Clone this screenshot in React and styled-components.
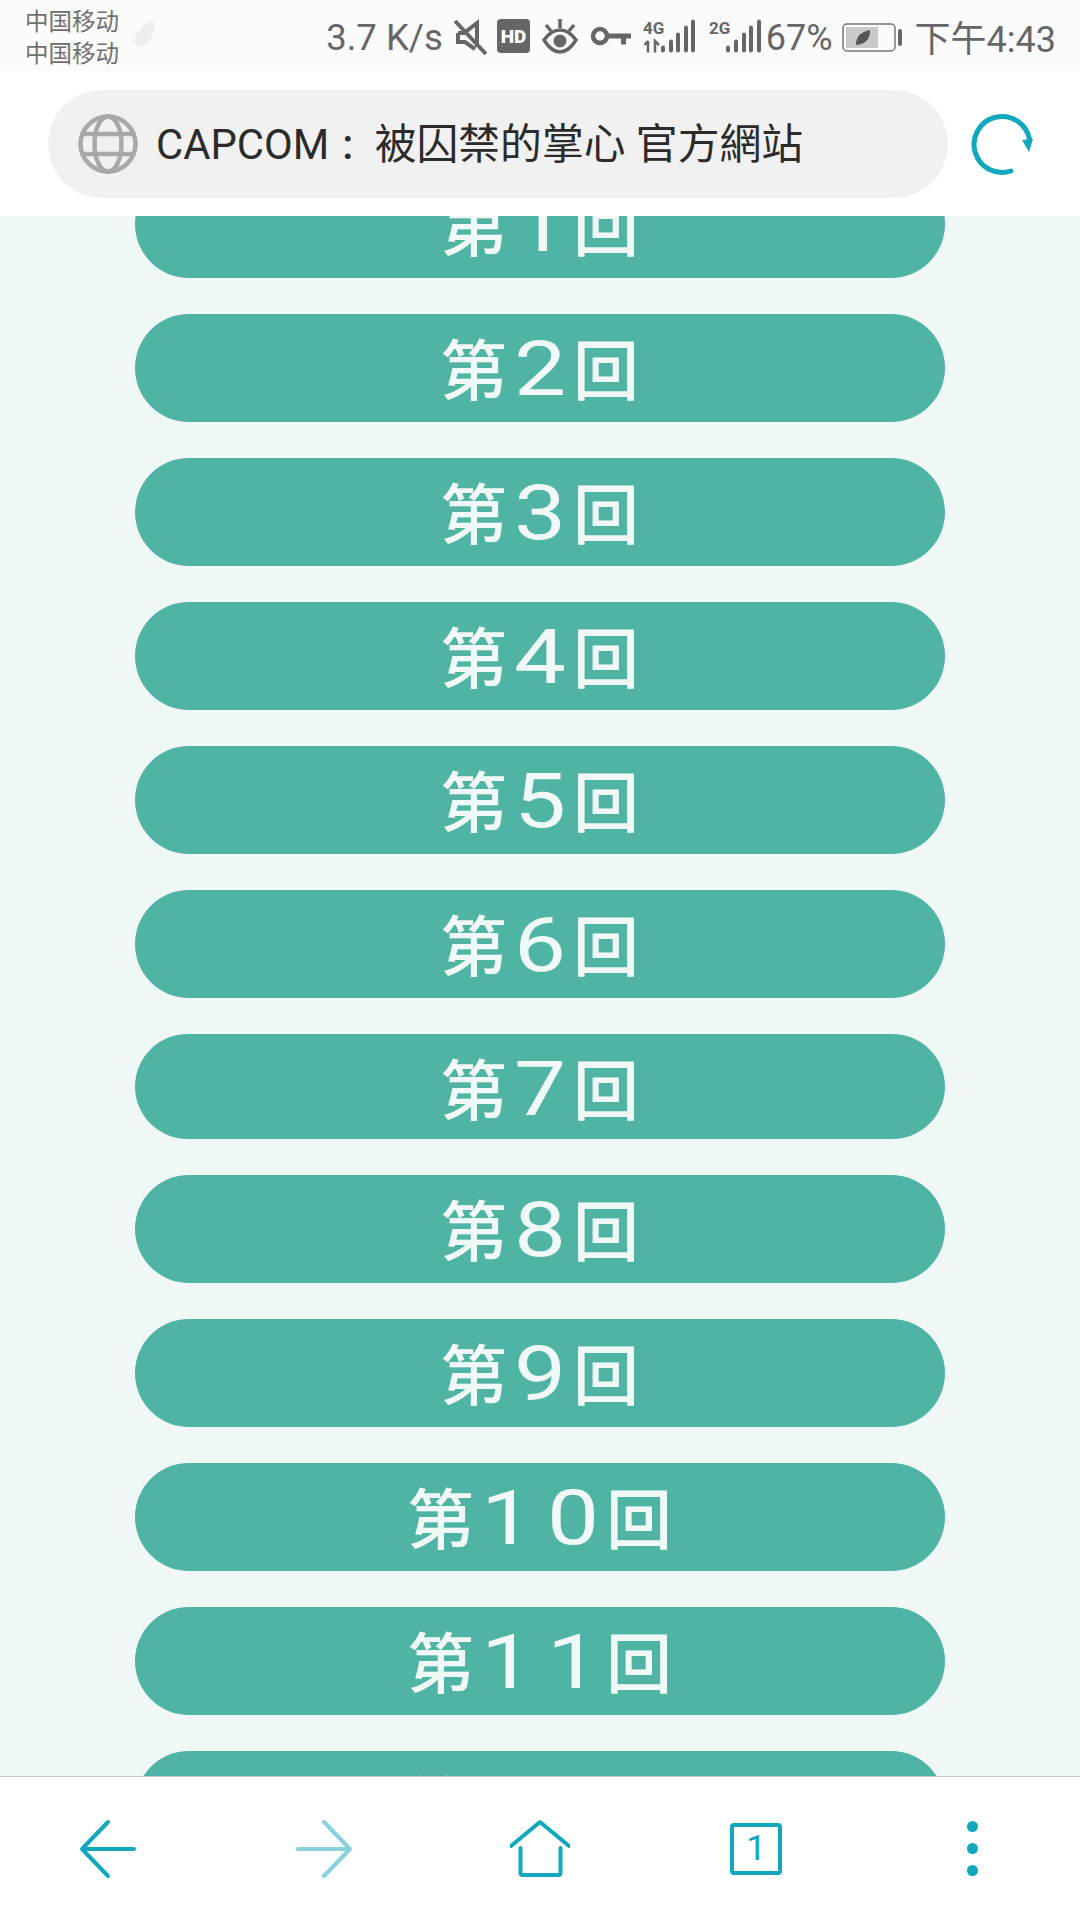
import React from "react"
import styled, { createGlobalStyle } from "styled-components"

const teal = "#11a7bf"

const GlobalStyle = createGlobalStyle`
  html, body {
    margin: 0;
    padding: 0;
    background: #fff;
  }
`

const Page = styled.div`
  width: 1080px;
  height: 1920px;
  display: flex;
  flex-direction: column;
  overflow: hidden;
  font-family: Roboto, "Noto Sans CJK SC", sans-serif;
`

const StatusBar = styled.div`
  height: 71px;
  flex: none;
  background: #fbfbfb;
  color: #666;
  display: flex;
  align-items: center;
  padding: 0 24px 0 25px;
  box-sizing: border-box;
`

const Carriers = styled.div`
  width: 96px;
  font-size: 23.5px;
  line-height: 32px;
  color: #707070;
  font-family: "Noto Sans CJK SC", sans-serif;
  white-space: nowrap;
`

const Rocket = styled.svg`
  width: 30px;
  height: 36px;
  margin-left: 7px;
`

const Speed = styled.span`
  margin: 4px 0 0 auto;
  font-size: 36.5px;
  white-space: nowrap;
`

const StatusIcon = styled.svg`
  flex: none;
  width: ${p => p.$w}px;
  height: 40px;
  margin-left: ${p => p.$gap}px;
`

const Percent = styled.span`
  margin: 4px 0 0 4.5px;
  font-size: 36px;
`

const Clock = styled.span`
  margin-left: 13px;
  font-size: 36px;
  white-space: nowrap;
`

const Toolbar = styled.div`
  height: 145px;
  flex: none;
  background: #fff;
  display: flex;
  align-items: center;
  padding-left: 48px;
  box-sizing: border-box;
`

const UrlBar = styled.div`
  width: 900px;
  height: 108px;
  border-radius: 54px;
  background: #f1f1f1;
  display: flex;
  align-items: center;
  padding-left: 30px;
  box-sizing: border-box;
`

const Title = styled.span`
  margin: 0 0 6px 18px;
  font-size: 41.8px;
  color: #2b2b2b;
  white-space: nowrap;
  font-family: Roboto, "Noto Sans CJK TC", sans-serif;
`

const Colon = styled.span`
  margin: 0 11px 0 13px;
  font-weight: 500;
`

const Reload = styled.svg`
  width: 66px;
  height: 66px;
  margin-left: 21px;
`

const Content = styled.div`
  flex: 1;
  min-height: 0;
  overflow: hidden;
  background: #eff8f7;
`

const List = styled.div`
  margin: -46px 135px 0 135px;
  display: flex;
  flex-direction: column;
  gap: 36px;
`

const EpisodeButton = styled.div`
  flex: none;
  height: ${p => (p.$short ? 105 : 108)}px;
  padding-bottom: 3px;
  box-sizing: border-box;
  border-radius: 54px;
  background: #50b4a4;
  color: #f0f9f7;
  display: flex;
  align-items: baseline;
  justify-content: center;
  font-size: 66px;
  line-height: 104px;
  font-weight: 500;
  font-family: "Noto Sans CJK JP", sans-serif;
  white-space: nowrap;
`

const Digit = styled.span`
  display: inline-block;
  width: 66px;
  text-align: center;
  font-family: Roboto, sans-serif;
  font-size: 76px;
  font-weight: 400;
  transform: scaleX(1.22);
`

const BottomBar = styled.div`
  height: 144px;
  flex: none;
  box-sizing: border-box;
  background: #fff;
  border-top: 1.5px solid #c8c8c8;
  display: grid;
  grid-template-columns: repeat(5, 1fr);
  align-items: center;
  justify-items: center;
`

const NavIcon = styled.svg`
  width: 60px;
  height: 60px;
  fill: none;
  stroke: ${teal};
  stroke-width: 4;
  stroke-linecap: round;
  stroke-linejoin: round;
  opacity: ${p => (p.$dim ? 0.5 : 1)};
`

const TabCount = styled.div`
  width: 52px;
  height: 52px;
  box-sizing: border-box;
  border: 4.5px solid ${teal};
  border-radius: 4px;
  color: ${teal};
  font-size: 35px;
  display: flex;
  align-items: center;
  justify-content: center;
`

const Dots = styled.div`
  display: flex;
  flex-direction: column;
  gap: 11px;
`

const Dot = styled.span`
  width: 11px;
  height: 11px;
  border-radius: 50%;
  background: ${teal};
`

const episodes = [1, 2, 3, 4, 5, 6, 7, 8, 9, 10, 11, 12]

const barHeights = [7, 13, 20, 27, 33]

const Signal = ({ label, labelX, barX, arrows }) => (
  <>
    <text x={labelX} y="17.5" fontSize="17" fontWeight="700" fill="#666" fontFamily="Roboto, sans-serif">{label}</text>
    {arrows && <path d="M5 36.5V25M1.5 29 5 25M12 36.5V25l4 4" stroke="#666" strokeWidth="2.5" fill="none" />}
    {barHeights.map((h, i) => (
      <rect key={i} x={barX[i] - 2} y={36.5 - h} width="4" height={h} rx="2" fill="#666" />
    ))}
  </>
)

const App = () => (
  <Page>
    <GlobalStyle />
    <StatusBar>
      <Carriers>
        <div>中国移动</div>
        <div>中国移动</div>
      </Carriers>
      <Rocket viewBox="0 0 30 36">
        <path d="M26 2C18 4 10 12 5 24l6 6c10-5 17-14 15-28z" fill="#efefef" />
      </Rocket>
      <Speed>3.7 K/s</Speed>
      <StatusIcon $w={33} $gap={11} viewBox="0 0 33 40">
        <path d="M4 17h6l13-10v24" fill="none" stroke="#666" strokeWidth="4" />
        <path d="M4 17v9h7l10 7" fill="none" stroke="#666" strokeWidth="4" />
        <path d="M1 5l31 33" stroke="#666" strokeWidth="4" />
      </StatusIcon>
      <StatusIcon $w={33} $gap={10} viewBox="0 0 33 40">
        <rect x="0" y="3" width="33" height="34" rx="4" fill="#666" />
        <text x="16.5" y="27" textAnchor="middle" fontSize="19" fontWeight="900" fill="#fff" fontFamily="Roboto, sans-serif">HD</text>
      </StatusIcon>
      <StatusIcon $w={36} $gap={12} viewBox="0 0 36 40">
        <path d="M2 24c5-7 10-10 16-10s11 3 16 10c-5 8-10 12-16 12S7 32 2 24z" fill="none" stroke="#666" strokeWidth="3.5" />
        <circle cx="18" cy="25" r="6.5" fill="#666" />
        <path d="M4 9l5 6M18 3v9M32 9l-5 6" stroke="#666" strokeWidth="3.5" />
      </StatusIcon>
      <StatusIcon $w={41} $gap={12} viewBox="0 0 41 40">
        <circle cx="10" cy="20" r="7" fill="none" stroke="#666" strokeWidth="4.5" />
        <path d="M17 17.5h24v5h-5v6h-5v-6h-14z" fill="#666" />
      </StatusIcon>
      <StatusIcon $w={54} $gap={12.5} viewBox="0 0 54 40">
        <Signal label="4G" labelX={0} barX={[20, 28, 35, 43, 50]} arrows />
      </StatusIcon>
      <StatusIcon $w={54} $gap={10} viewBox="0 0 54 40">
        <Signal label="2G" labelX={2} barX={[21, 29, 37, 44, 52]} />
      </StatusIcon>
      <Percent>67%</Percent>
      <StatusIcon $w={60} $gap={9} viewBox="0 0 60 40">
        <rect x="1" y="8" width="52" height="27" rx="4" fill="none" stroke="#777" strokeWidth="1.5" />
        <rect x="4" y="11" width="32" height="21" fill="#c9c9c9" />
        <path d="M14 29c0-10 6-13 14-15 0 9-4 14-14 15z" fill="#555" />
        <rect x="56" y="13" width="4" height="17" rx="2" fill="#666" />
      </StatusIcon>
      <Clock>下午4:43</Clock>
    </StatusBar>

    <Toolbar>
      <UrlBar>
        <svg width="60" height="60" viewBox="0 0 60 60" fill="none" stroke="#a8a8a8" strokeWidth="4.5">
          <circle cx="30" cy="30" r="27.5" />
          <ellipse cx="30" cy="30" rx="13.5" ry="27.5" />
          <path d="M5 20h50M5 40h50" />
        </svg>
        <Title>CAPCOM<Colon>:</Colon> 被囚禁的掌心 官方網站</Title>
      </UrlBar>
      <Reload viewBox="0 0 66 66">
        <path d="M60.5 28A28 28 0 1 0 42 60" fill="none" stroke={teal} strokeWidth="5" strokeLinecap="round" />
        <path d="M53 29l11-1-4 13z" fill={teal} />
      </Reload>
    </Toolbar>

    <Content>
      <List>
        {episodes.map(n => (
          <EpisodeButton key={n} $short={n === 7}>
            第{String(n).split("").map((c, i) => <Digit key={i}>{c}</Digit>)}回
          </EpisodeButton>
        ))}
      </List>
    </Content>

    <BottomBar>
      <NavIcon viewBox="0 0 60 60">
        <path d="M56 30H4M30 3 4 30l26 27" />
      </NavIcon>
      <NavIcon $dim viewBox="0 0 60 60">
        <path d="M4 30h52M30 3l26 27-26 27" />
      </NavIcon>
      <NavIcon viewBox="0 0 60 60">
        <path d="M1 27 30 3l29 24M10.5 29v25a2 2 0 0 0 2 2h36a2 2 0 0 0 2-2V29" />
      </NavIcon>
      <TabCount>1</TabCount>
      <Dots>
        <Dot />
        <Dot />
        <Dot />
      </Dots>
    </BottomBar>
  </Page>
)

export default App
